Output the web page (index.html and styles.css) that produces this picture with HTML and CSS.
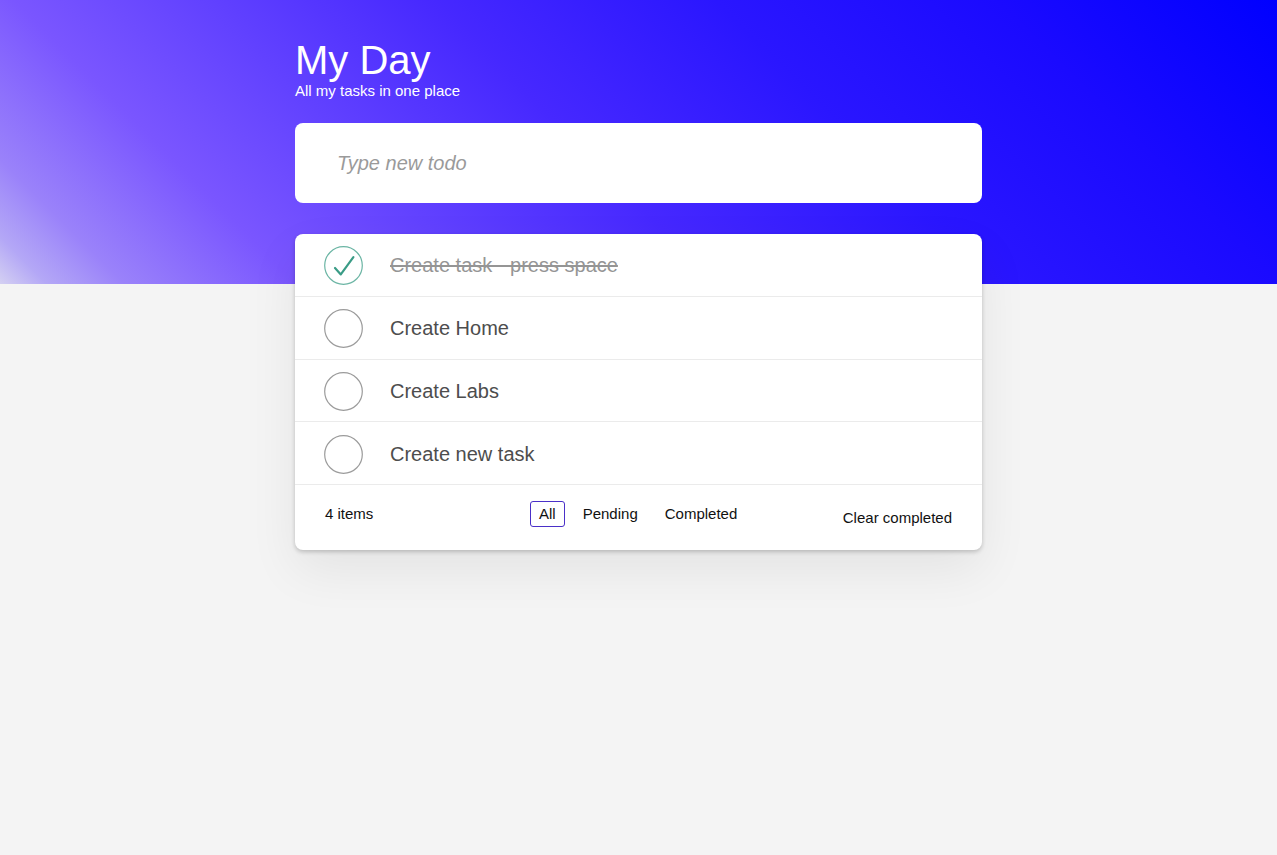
FILE: index.html
```html
<!DOCTYPE html>
<html>
<head>
<meta charset="utf-8">
<link rel="stylesheet" href="styles.css">
</head>
<body>
<div class="hero"></div>
<main class="app">
  <header class="head">
    <h1 class="title">My Day</h1>
    <p class="subtitle">All my tasks in one place</p>
  </header>
  <div class="new-card">
    <input class="new-input" type="text" placeholder="Type new todo">
  </div>
  <section class="list-card">
    <ul class="list">
      <li class="item done">
        <span class="check">
          <svg width="39" height="39" viewBox="0 0 39 39"><circle cx="19.5" cy="19.5" r="18.8" fill="none" stroke="#6bb5a4" stroke-width="1.2"/><path d="M11 22 L16.8 28.4 L29.4 11.2" fill="none" stroke="#3a9c86" stroke-width="2.2" stroke-linecap="round" stroke-linejoin="round"/></svg>
        </span>
        <span class="label">Create task - press space</span>
      </li>
      <li class="item">
        <span class="check"><svg width="39" height="39" viewBox="0 0 39 39"><circle cx="19.5" cy="19.5" r="18.8" fill="none" stroke="#9b9b9b" stroke-width="1.2"/></svg></span>
        <span class="label">Create Home</span>
      </li>
      <li class="item">
        <span class="check"><svg width="39" height="39" viewBox="0 0 39 39"><circle cx="19.5" cy="19.5" r="18.8" fill="none" stroke="#9b9b9b" stroke-width="1.2"/></svg></span>
        <span class="label">Create Labs</span>
      </li>
      <li class="item">
        <span class="check"><svg width="39" height="39" viewBox="0 0 39 39"><circle cx="19.5" cy="19.5" r="18.8" fill="none" stroke="#9b9b9b" stroke-width="1.2"/></svg></span>
        <span class="label">Create new task</span>
      </li>
    </ul>
    <footer class="foot">
      <span class="count">4 items</span>
      <div class="filters">
        <a class="filter active">All</a>
        <a class="filter">Pending</a>
        <a class="filter">Completed</a>
      </div>
      <button class="clear">Clear completed</button>
    </footer>
  </section>
</main>
</body>
</html>
```
FILE: styles.css
```css
* { box-sizing: border-box; }
html, body { margin: 0; padding: 0; }
body {
  background: #f4f4f4;
  font-family: "Liberation Sans", Arial, sans-serif;
  min-height: 855px;
  position: relative;
}
.hero {
  position: absolute;
  left: 0; top: 0; right: 0;
  height: 284px;
  background: linear-gradient(225deg, #0000ff 0%, #1a0aff 18%, #2a16ff 36%, #4628ff 54%, #6242ff 69%, #7a56ff 81%, #9a82fa 92%, #b4a8f6 97%, #d4d0f2 100%);
  z-index: 0;
}
.app {
  position: relative;
  z-index: 1;
  width: 687px;
  margin: 0 auto;
  padding-top: 38px;
}
.head { color: #fff; }
.title {
  margin: 0;
  font-weight: 400;
  font-size: 40px;
  line-height: 44px;
}
.subtitle {
  margin: 0;
  font-size: 15px;
  line-height: 18px;
}
.new-card {
  margin-top: 23px;
  height: 80px;
  background: #fff;
  border-radius: 8px;
  display: flex;
  align-items: center;
  padding: 0 40px;
}
.new-input {
  border: none;
  outline: none;
  width: 100%;
  font-family: "Liberation Sans", Arial, sans-serif;
  font-style: italic;
  font-size: 20px;
  color: #444;
  background: transparent;
}
.new-input::placeholder { color: #9a9a9a; }
.list-card {
  margin-top: 31px;
  background: #fff;
  border-radius: 8px;
  box-shadow: 0 2px 4px rgba(0,0,0,0.2), 0 20px 50px rgba(0,0,0,0.07);
  overflow: hidden;
}
.list { list-style: none; margin: 0; padding: 0; }
.item {
  height: 62.75px;
  display: flex;
  align-items: center;
  padding-left: 29px;
  padding-top: 2px;
  border-bottom: 1px solid #ebebeb;
}
.check { width: 39px; height: 39px; display: block; }
.check svg { display: block; }
.label {
  margin-left: 27px;
  font-size: 20px;
  color: #4d4d4d;
}
.done .label {
  color: #959595;
  text-decoration: line-through;
}
.foot {
  height: 65px;
  display: flex;
  align-items: center;
  padding: 0 30px;
  font-size: 15px;
  color: #111;
}
.count { width: 205px; margin-bottom: 8px; }
.filters { display: flex; gap: 9px; align-items: center; margin-bottom: 7px; }
.filter {
  padding: 4px 8px;
  border: 1px solid transparent;
  border-radius: 3px;
  line-height: 16px;
}
.filter.active { border-color: #4a30c8; }
.clear {
  margin-left: auto;
  margin-bottom: 1px;
  border: none;
  background: none;
  font-family: "Liberation Sans", Arial, sans-serif;
  font-size: 15px;
  color: #111;
  padding: 0;
}
```
